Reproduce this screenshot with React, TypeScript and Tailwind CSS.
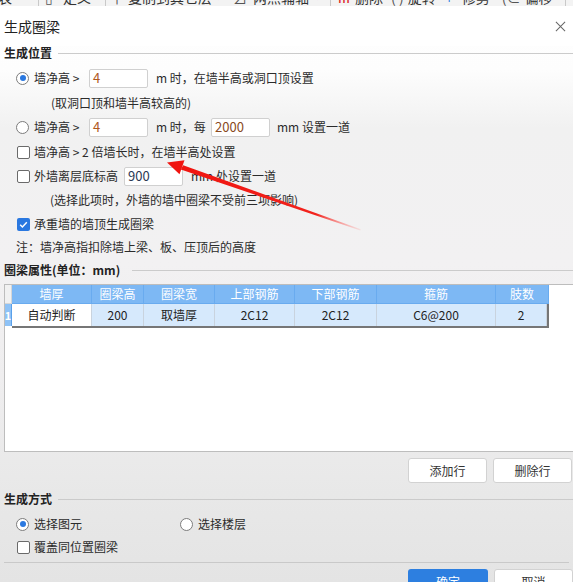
import React from 'react'

const Radio = ({ checked }: { checked?: boolean }) => (
  <span className="flex h-[13px] w-[13px] shrink-0 items-center justify-center rounded-full border border-[#7c7c7c] bg-white">
    {checked && <span className="h-[6px] w-[6px] rounded-full bg-[#2a78e0]" />}
  </span>
)

const Check = ({ checked }: { checked?: boolean }) =>
  checked ? (
    <span className="flex h-[13px] w-[13px] shrink-0 items-center justify-center rounded-[2px] bg-[#2a78e0]">
      <svg viewBox="0 0 12 12" className="h-[11px] w-[11px]">
        <path d="M2.4 6.3l2.4 2.4 4.8-5.2" stroke="white" strokeWidth="1.6" fill="none" />
      </svg>
    </span>
  ) : (
    <span className="h-[13px] w-[13px] shrink-0 rounded-[2px] border border-[#6a6a6a] bg-white" />
  )

const Field = ({ value, className }: { value: string; className?: string }) => (
  <span
    className={`flex h-[19px] w-[59px] shrink-0 items-center rounded-[2px] border border-[#d0d0d0] bg-white pl-[3px] text-[13px] ${className ?? ''}`}
  >
    {value}
  </span>
)

const Legend = ({ title, wide }: { title: string; wide?: boolean }) => (
  <div className={`flex h-[14px] items-center pl-[4px] ${wide ? 'gap-[12px]' : 'gap-[6px]'}`}>
    <span className="text-[12px] font-semibold text-[#222]">{title}</span>
    <span className="h-px flex-1 bg-[#cbcbcb]" />
  </div>
)

const Button = ({ label, primary }: { label: string; primary?: boolean }) => (
  <button
    className={
      primary
        ? 'flex h-[25px] w-[80px] items-center justify-center rounded-[3px] bg-[#2d7fe0] text-[12px] text-white'
        : 'flex h-[25px] w-[79px] items-center justify-center rounded-[3px] border border-[#d2d2d2] bg-white text-[12px] text-[#333]'
    }
  >
    {label}
  </button>
)

const columns = ['墙厚', '圈梁高', '圈梁宽', '上部钢筋', '下部钢筋', '箍筋', '肢数']
const row = ['自动判断', '200', '取墙厚', '2C12', '2C12', 'C6@200', '2']

// strip of the ribbon behind the dialog, only its lower edge shows
const Toolbar = () => (
  <div className="h-[6px] overflow-hidden bg-[#f3f3f3]">
    <div className="-mt-[12px] flex h-[18px] items-center whitespace-nowrap text-[14px] text-[#333]">
      <span className="-ml-[2px]">表</span>
      <span className="ml-[26px] h-[18px] w-px bg-[#c9c9c9]" />
      <span className="ml-[6px] text-[#555]">▯</span>
      <span className="ml-[10px]">定义</span>
      <span className="ml-[14px] h-[18px] w-px bg-[#c9c9c9]" />
      <span className="ml-[4px] text-[#555]">♀</span>
      <span className="ml-[4px]">复制到其它层</span>
      <span className="ml-[2px] text-[9px] text-[#666]">▼</span>
      <span className="ml-[10px] text-[#555]">⊿</span>
      <span className="ml-[6px]">两点辅轴</span>
      <span className="ml-[4px] text-[9px] text-[#666]">▼</span>
      <span className="ml-[8px] h-[18px] w-px bg-[#c9c9c9]" />
      <span className="ml-[6px] text-[#d22]">Ⅲ</span>
      <span className="ml-[4px]">删除</span>
      <span className="ml-[8px] text-[#555]">( )</span>
      <span className="ml-[4px]">旋转</span>
      <span className="ml-[12px] text-[#2a78e0]">⌐</span>
      <span className="ml-[6px]">修剪</span>
      <span className="ml-[12px] text-[#555]">(⊂</span>
      <span className="ml-[4px]">偏移</span>
      <span className="ml-[12px] h-[18px] w-px bg-[#c9c9c9]" />
    </div>
  </div>
)

export default function App() {
  return (
    <div className="relative h-[582px] w-[573px] overflow-hidden bg-[linear-gradient(180deg,#ffffff_0%,#fdfdfd_12%,#f1f1f1_22%,#f2f1f2_45%,#efeeef_65%,#e8e8e8_85%,#e4e4e4_100%)] font-['Noto_Sans_CJK_SC','Noto_Sans',sans-serif] text-[12px] text-[#2b2b2b]">
      <Toolbar />

      {/* title bar */}
      <div className="flex h-[40px] items-center justify-between bg-white pl-[4px] pr-[7px]">
        <span className="text-[14px] text-[#222]">生成圈梁</span>
        <svg viewBox="0 0 12 12" className="h-[11px] w-[11px]">
          <path d="M1 1l10 10M11 1L1 11" stroke="#666" strokeWidth="1.1" />
        </svg>
      </div>

      <Legend title="生成位置" />

      <div className="mt-[8px] flex h-[20px] items-center pl-[16px]">
        <Radio checked />
        <span className="ml-[5px] w-[55px]">墙净高 &gt;</span>
        <Field value="4" className="text-[#b0581e]" />
        <span className="ml-[8px]">m 时，在墙半高或洞口顶设置</span>
      </div>
      <div className="mt-[5px] flex h-[20px] items-center pl-[51px]">(取洞口顶和墙半高较高的)</div>

      <div className="mt-[4px] flex h-[20px] items-center pl-[16px]">
        <Radio />
        <span className="ml-[5px] w-[55px]">墙净高 &gt;</span>
        <Field value="4" className="text-[#b0581e]" />
        <span className="ml-[8px] w-[55px]">m 时，每</span>
        <Field value="2000" className="text-[#8a4a22]" />
        <span className="ml-[7px]">mm 设置一道</span>
      </div>

      <div className="mt-[5px] flex h-[20px] items-center pl-[17px]">
        <Check />
        <span className="ml-[4px]">墙净高 &gt; 2 倍墙长时，在墙半高处设置</span>
      </div>

      <div className="mt-[4px] flex h-[20px] items-center pl-[17px]">
        <Check />
        <span className="ml-[4px] w-[90px]">外墙离层底标高</span>
        <Field value="900" className="text-[#2c3a55]" />
        <span className="ml-[8px]">mm 处设置一道</span>
      </div>
      <div className="mt-[4px] flex h-[20px] items-center pl-[50px]">(选择此项时，外墙的墙中圈梁不受前三项影响)</div>

      <div className="mt-[4px] flex h-[20px] items-center pl-[17px]">
        <Check checked />
        <span className="ml-[4px]">承重墙的墙顶生成圈梁</span>
      </div>
      <div className="mt-[3px] flex h-[20px] items-center pl-[16px]">注：墙净高指扣除墙上梁、板、压顶后的高度</div>

      <div className="mt-[6px]">
        <Legend title="圈梁属性(单位：mm)" wide />
      </div>

      {/* property grid */}
      <div className="ml-[4px] mt-[7px] h-[168px] w-[600px] border border-[#bdbdbd] bg-white">
        <div className="flex">
          <div className="flex w-[7px] flex-col">
            <div className="h-[19px] border-b border-r border-[#d6d6d6] bg-[#f1f1f1]" />
            <div className="flex h-[22px] items-center justify-center border-r border-[#5aa0ea] bg-[#8ec2f6] text-[11px] font-semibold text-white">
              1
            </div>
          </div>
          <div className="w-[537px]">
            <div className="grid h-[19px] grid-cols-[80px_52px_71px_80px_82px_119px_53px] border-b border-[#69abef] bg-[#7db8f4]">
              {columns.map((c) => (
                <div key={c} className="flex items-center justify-center border-r border-[#69abef] text-[12px] text-white">
                  {c}
                </div>
              ))}
            </div>
            <div className="grid h-[24px] grid-cols-[80px_52px_71px_80px_82px_119px_51px] border-b-2 border-r-2 border-[#767676]">
              {row.map((v, idx) => (
                <div
                  key={idx}
                  className={`flex h-[22px] items-center justify-center border-r border-[#c9d3de] text-[12px] text-[#222] ${
                    idx === 0 ? 'bg-white' : 'bg-[#d6e9fc]'
                  }`}
                >
                  {v}
                </div>
              ))}
            </div>
          </div>
        </div>
      </div>

      <div className="mt-[6px] flex justify-end gap-[6px] pr-[1px]">
        <Button label="添加行" />
        <Button label="删除行" />
      </div>

      <div className="mt-[9px]">
        <Legend title="生成方式" />
      </div>

      <div className="mt-[8px] flex h-[20px] items-center pl-[16px]">
        <Radio checked />
        <span className="ml-[5px] w-[146px]">选择图元</span>
        <Radio />
        <span className="ml-[5px]">选择楼层</span>
      </div>
      <div className="mt-[3px] flex h-[20px] items-center pl-[17px]">
        <Check />
        <span className="ml-[4px]">覆盖同位置圈梁</span>
      </div>

      <div className="mx-[4px] mt-[5px] h-px bg-[#c9c9c9]" />

      <div className="mt-[6px] flex justify-end gap-[6px]">
        <Button label="确定" primary />
        <Button label="取消" />
      </div>

      {/* red annotation arrow */}
      <svg className="pointer-events-none absolute left-0 top-0" width="573" height="582" viewBox="0 0 573 582">
        <defs>
          <linearGradient id="shaft" gradientUnits="userSpaceOnUse" x1="180" y1="166" x2="362" y2="230">
            <stop offset="0" stopColor="#f0140f" />
            <stop offset="0.75" stopColor="#f2231d" />
            <stop offset="1" stopColor="#ff8a86" stopOpacity="0.15" />
          </linearGradient>
        </defs>
        <polygon points="183.2,165.2 180.8,169.6 360.3,230.4 360.7,229.2" fill="url(#shaft)" />
        <polygon points="167,162.5 184.5,160.2 179.5,174.2" fill="#f0140f" />
      </svg>
    </div>
  )
}
